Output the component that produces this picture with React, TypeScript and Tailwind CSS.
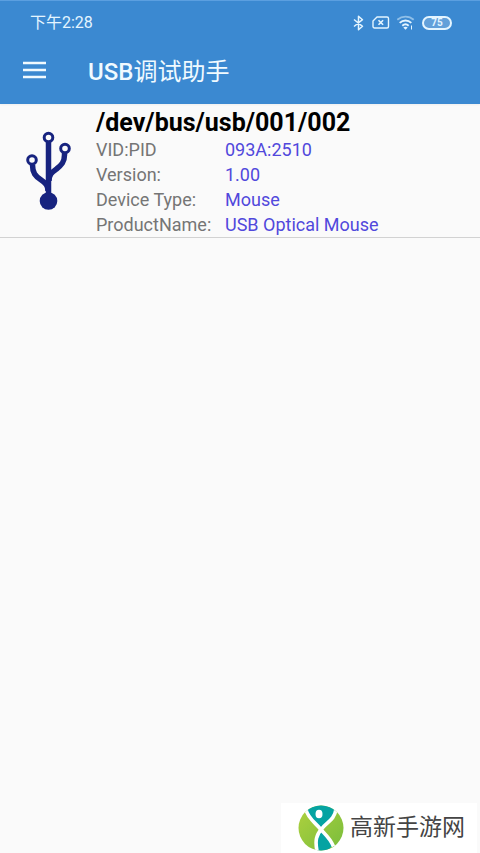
const details = [
  { label: 'VID:PID', value: '093A:2510' },
  { label: 'Version:', value: '1.00' },
  { label: 'Device Type:', value: 'Mouse' },
  { label: 'ProductName:', value: 'USB Optical Mouse' },
];

function StatusBar() {
  return (
    <div className="flex h-11 items-center justify-between pr-7 pl-[30px] text-[#e4f5ff]">
      <span className="text-base leading-6">下午2:28</span>
      <div className="flex items-center gap-[7px]">
        <svg className="h-4 w-3" viewBox="0 0 12 16" fill="none" stroke="currentColor" strokeWidth="1.5" strokeLinejoin="round">
          <path d="M1 4.500 9.500 11.300 5.500 14.800V1.200l4 3.500L1 11.500" />
        </svg>
        <svg className="h-4 w-[18px]" viewBox="0 0 18 16" fill="none" stroke="currentColor" strokeWidth="1.4" strokeLinejoin="round">
          <path d="M5 2H15a1.500 1.500 0 0 1 1.500 1.500v8a1.500 1.500 0 0 1-1.500 1.500H2.500A1.500 1.500 0 0 1 1 11.500V6z" />
          <path d="m6.500 5.200 4.600 4.600m0-4.600-4.600 4.600" strokeWidth="1.600" />
        </svg>
        <svg className="h-4 w-[18px]" viewBox="0 0 18 16" fill="none" stroke="currentColor" strokeWidth="1.9">
          <path d="M.3 4.800C5 .6 12 .6 16.700 4.800" opacity=".5" />
          <path d="M2.700 7.900c3.300-3.200 8.300-3.200 11.600 0" />
          <path d="M5.300 10.700c1.900-1.800 4.500-1.800 6.400 0" />
          <path d="m8.500 14.800-2.200-2.200c1.200-1.100 3.200-1.100 4.400 0z" fill="currentColor" stroke="none" />
          <path d="M14.500 10.500v4" strokeWidth="1" />
        </svg>
        <span className="flex h-[14px] w-[30px] items-center justify-center rounded-full border-2 border-current bg-white/20 text-[10px] leading-3 font-bold">
          75
        </span>
      </div>
    </div>
  );
}

function UsbIcon() {
  return (
    <svg className="h-20 w-12" viewBox="0 0 48 80" fill="none" stroke="#17237f">
      <path d="M24.500 11v53" strokeWidth="5.500" />
      <path d="M8.500 34c0 8 3 11 8 14.500 5 3.500 7.500 5.500 7.500 11.500" strokeWidth="5.500" />
      <path d="M40.500 22v2c0 7-3 10-8 14-5 3.500-7.500 6-7.500 12" strokeWidth="5.500" />
      <circle cx="24.500" cy="6.500" r="4.300" fill="#fafafa" strokeWidth="3" />
      <circle cx="8" cy="29" r="4.300" fill="#fafafa" strokeWidth="3" />
      <circle cx="41" cy="17.500" r="4.300" fill="#fafafa" strokeWidth="3" />
      <circle cx="24.500" cy="70" r="8.800" fill="#17237f" stroke="none" />
    </svg>
  );
}

function SiteLogo() {
  return (
    <svg className="size-[46px] shrink-0" viewBox="0 0 46 46">
      <defs>
        <clipPath id="disc">
          <circle cx="23" cy="23" r="22.500" />
        </clipPath>
        <linearGradient id="leaf" x1="0" y1="0" x2="1" y2="1">
          <stop offset="0" stopColor="#b0d13e" />
          <stop offset="1" stopColor="#78bd3c" />
        </linearGradient>
      </defs>
      <g clipPath="url(#disc)">
        <rect width="46" height="46" fill="url(#leaf)" />
        <path d="M9 0v5c2 8 9 13 14 19 5-6 13-8 14.500-19V0z" fill="#05a3a2" />
        <path d="M24 24c-5 6-6 12-5 22h10l6-6c-2-6-7-10-11-16z" fill="#05a3a2" />
        <path d="M8 4.500c1.500 8 9 13 14 19 4 5 10 9 13.500 18" fill="none" stroke="#fff" strokeWidth="3.600" />
        <path d="M38 4C36.500 15 29 17 24 23.500 18 30 17 36 19 46" fill="none" stroke="#fff" strokeWidth="3.600" />
      </g>
      <ellipse cx="21" cy="9" rx="3.500" ry="4.300" fill="#fff" />
    </svg>
  );
}

export default function App() {
  return (
    <div className="min-h-screen bg-[#fafafa] font-[Roboto,'Noto_Sans_CJK_SC',sans-serif]">
      <header className="h-[104px] border-t border-[#5b9fe0] bg-[#3b89d1] shadow-xs">
        <StatusBar />
        <div className="flex h-[50px] items-center gap-[42px] pl-[22px] text-[#f0faff]">
          <button type="button" aria-label="Menu" className="flex size-6 items-center justify-center">
            <svg className="h-[18px] w-6" viewBox="0 0 24 18" fill="none" stroke="currentColor" strokeWidth="2.500">
              <path d="M1 2h23M1 9h23M1 16h23" />
            </svg>
          </button>
          <h1 className="pt-[3px] text-2xl">
            <span className="font-medium">USB</span>
            <span className="font-normal">调试助手</span>
          </h1>
        </div>
      </header>

      <main>
        <section className="flex border-b border-[#d2d2d2] pt-1">
          <div className="flex w-24 shrink-0 items-center justify-center pb-1">
            <UsbIcon />
          </div>
          <div className="min-w-0">
            <h2 className="text-[25px] leading-[29px] font-bold text-black">/dev/bus/usb/001/002</h2>
            <dl className="grid grid-cols-[129px_1fr] text-lg leading-[25px]">
              {details.map((item) => (
                <div key={item.label} className="contents">
                  <dt className="text-[#757575]">{item.label}</dt>
                  <dd className="text-[#5148dc]">{item.value}</dd>
                </div>
              ))}
            </dl>
          </div>
        </section>
      </main>

      <div className="fixed right-[3px] bottom-0 flex h-[50px] w-[196px] items-center gap-1.5 bg-white pl-[17px]">
        <SiteLogo />
        <span className="text-[23px] leading-8 whitespace-nowrap text-[#454545]">高新手游网</span>
      </div>
    </div>
  );
}
